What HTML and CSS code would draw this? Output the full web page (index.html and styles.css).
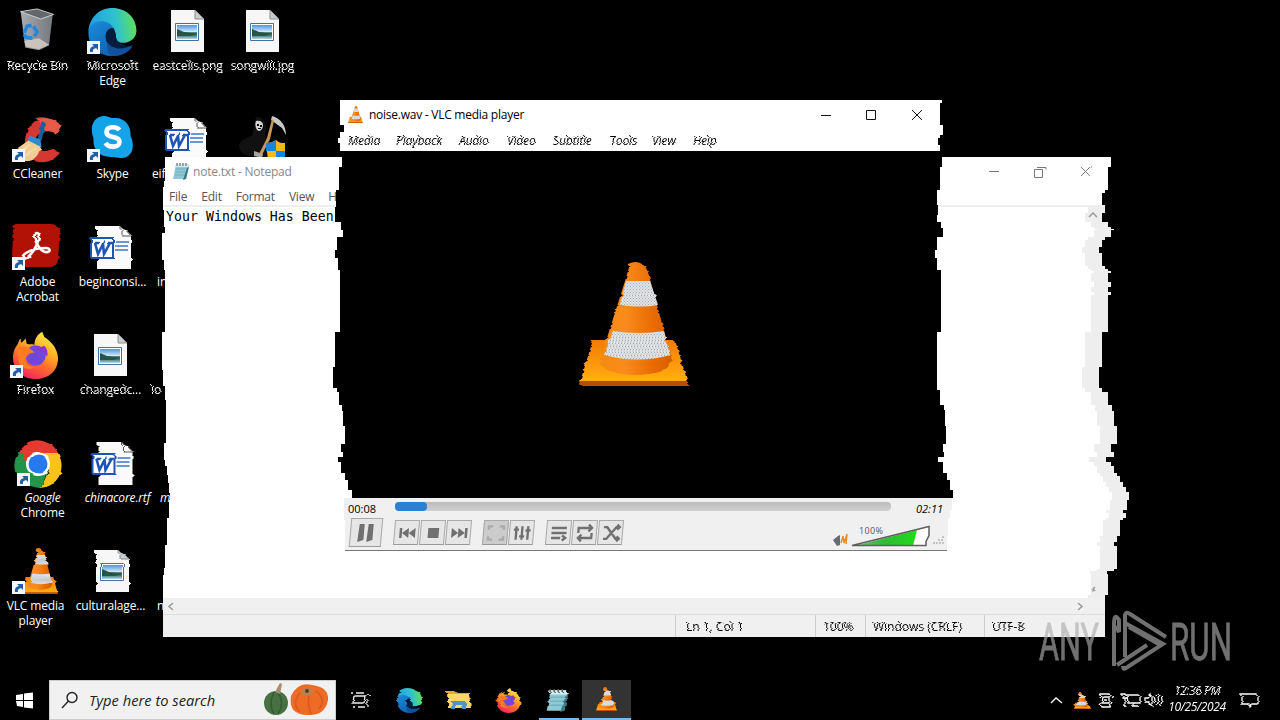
FILE: index.html
```html
<!DOCTYPE html>
<html lang="en">
<head>
<meta charset="utf-8">
<title>Desktop</title>
<link rel="stylesheet" href="styles.css">
</head>
<body>
<svg class="defs" width="0" height="0" aria-hidden="true">
  <defs>
    <filter id="tear" x="-10%" y="-10%" width="120%" height="120%" color-interpolation-filters="sRGB">
      <feTurbulence type="fractalNoise" baseFrequency="0.0001 0.22" numOctaves="2" seed="4"/>
      <feColorMatrix values="1 0 0 0 0  0 0 0 0 .5  0 0 0 0 .5  0 0 0 0 1" result="rows"/>
      <feDisplacementMap in="SourceGraphic" in2="rows" scale="9" xChannelSelector="R" yChannelSelector="G"/>
    </filter>
    <linearGradient id="gCone" x1="0" x2="1"><stop offset="0" stop-color="#f58a10"/><stop offset=".35" stop-color="#f98b1c"/><stop offset=".75" stop-color="#e96a00"/><stop offset="1" stop-color="#d85f00"/></linearGradient>
    <linearGradient id="gBase" x1="0" y1="0" x2="0" y2="1"><stop offset="0" stop-color="#f07c00"/><stop offset=".6" stop-color="#ff9d0c"/><stop offset=".9" stop-color="#ffb010"/><stop offset="1" stop-color="#d06000"/></linearGradient>
    <linearGradient id="gSky" x1="0" y1="0" x2="0" y2="1"><stop offset="0" stop-color="#4f94e0"/><stop offset=".5" stop-color="#d7ecf5"/><stop offset=".55" stop-color="#2d5a4c"/><stop offset=".75" stop-color="#447c74"/><stop offset="1" stop-color="#b7d9ec"/></linearGradient>
    <linearGradient id="gEdge" x1="0" y1=".3" x2="1" y2=".2"><stop offset="0" stop-color="#1f9fe0"/><stop offset=".55" stop-color="#2fc1d0"/><stop offset="1" stop-color="#62e34e"/></linearGradient>
    <linearGradient id="gEdge2" x1="0" y1="0" x2="1" y2="1"><stop offset="0" stop-color="#1a8fdc"/><stop offset="1" stop-color="#0c4fa0"/></linearGradient>
    <linearGradient id="gFox" x1=".8" y1="0" x2=".3" y2="1"><stop offset="0" stop-color="#fff04a"/><stop offset=".35" stop-color="#ffb325"/><stop offset=".65" stop-color="#ff6a2c"/><stop offset="1" stop-color="#f32063"/></linearGradient>
    <linearGradient id="gBin" x1="0" x2="1"><stop offset="0" stop-color="#a9acb0"/><stop offset=".5" stop-color="#8d9196"/><stop offset="1" stop-color="#75797e"/></linearGradient>
    <linearGradient id="gVol" x1="0" x2="1"><stop offset="0" stop-color="#79b579"/><stop offset=".5" stop-color="#2ebb35"/><stop offset="1" stop-color="#1fdc1a"/></linearGradient>
    <pattern id="mesh" width="3" height="3" patternUnits="userSpaceOnUse"><rect width="3" height="3" fill="#e2e5e8"/><path d="M0 0h1v1H0zM1.5 1.5h1v1h-1z" fill="#a5a9ae"/></pattern>

    <symbol id="bin" viewBox="0 0 48 48">
      <path d="M5 3 40 8l-4 33-11 5-15-3z" fill="url(#gBin)"/>
      <path d="M5 4 23 1l18 6-14 5z" fill="#63676b" stroke="#d4d6d8"/>
      <path d="M9 36l16-3 11 7-11 5-14-3z" fill="#d9cfc6" opacity=".8"/>
      <g fill="none" stroke="#2587d8" stroke-width="4"><path d="M9 27l3-7 5-1M19 20l4 6-3 5M18 33l-7-1-2-3"/></g>
    </symbol>
    <symbol id="edge" viewBox="0 0 48 48">
      <path d="M24 0C10 0 1 10 0 23c5-8 19-9 24-3 5 5 2 9 5 13 4 4 18 2 19-10C48 9 37 0 24 0z" fill="url(#gEdge)"/>
      <path d="M0 23C2 10 21 11 25 20c-7 0-9 7-7 13 3 8 13 12 26 5-4 7-12 10-20 10C9 48-1 37 0 23z" fill="url(#gEdge2)"/>
      <path d="M25 20c-7 0-9 7-7 13 3 8 13 12 26 5-7 0-11-1-15-5-3-4-1-8-4-13z" fill="#051d3c"/>
      <path d="M19 34c4 7 14 9 25 3-4 7-11 11-20 11-5-2-6-9-5-14z" fill="#11509c"/>
    </symbol>
    <symbol id="picture" viewBox="0 0 34 43">
      <path d="M0 0h24l9 9v33H0z" fill="#f7f7f7"/><path d="M24 0v9h9z" fill="#c9cccf" stroke="#8b8e92"/>
      <path d="M4.500 13.500h23v17h-23z" fill="#fff" stroke="#4171a8"/><path d="M6 15h20v14H6z" fill="url(#gSky)"/><path d="M6 19l7 3 13 2-7 2H6z" fill="#265545"/>
    </symbol>
    <symbol id="word" viewBox="0 0 42 44">
      <path d="M7 0h25l9 9v34H7z" fill="#fafafa"/><path d="M32 0v10h9z" fill="#fff" stroke="#555"/>
      <path d="M25 16h13M25 20h13M25 24h13" stroke="#3d78c8" stroke-width="1.300"/>
      <path d="M1 12h22v20H1z" fill="#fff" stroke="#1d54b5" stroke-width="2"/>
      <path d="M4 17h5M5 17l3 11 5-10 1 10 6-11M17 17h5" fill="none" stroke="#1d54b5" stroke-width="2.600"/>
    </symbol>
    <symbol id="ccleaner" viewBox="0 0 48 46">
      <path d="M46 9 41 17C33 11 23 14 21 22s6 15 15 9l9 4C37 46 24 46 17 41 7 34 9 9 23 3 30-1 40 1 46 9z" fill="#d43830"/>
      <path d="M23 1C31-1 41 1 46 9l-5 8c-3-3-7-4-11-3z" fill="#ef6a55" opacity=".7"/>
      <path d="M27 4l4 2-4 17-4-1z" fill="#145f9e"/><path d="M15 18l11 4 1 8-14-4z" fill="#2d8bd2"/>
      <path d="M14 23l12 6c-2 10-8 15-17 14L0 33z" fill="#f1cf94"/><path d="M4 35l12-8M9 40l12-10" stroke="#fae3bd"/>
    </symbol>
    <symbol id="skype" viewBox="0 0 42 43">
      <path d="M12 0c5 0 6 2 10 2 12-1 18 9 17 18 5 10 2 22-9 22-5 0-6-1-11-1C7 41 1 33 2 22-2 12 1 1 12 0z" fill="#14a2e8"/>
      <path d="M28 14c-3-4-13-4-13 2 0 7 13 3 13 10 0 6-11 6-14 1" fill="none" stroke="#fff" stroke-width="4.600"/>
    </symbol>
    <symbol id="reaper" viewBox="0 0 50 46">
      <path d="M18 1c9-1 12 9 9 18l6 9-4 14-9-2C6 42 1 35 1 29c4-9 14-6 14-13z" fill="#111"/>
      <path d="M18 5c4-1 7 1 7 4s-2 6-4 6-5-5-3-10z" fill="#d2d2d2"/><path d="M19 8h2v2h-2zM22 9h2v2h-2zM20 12h3v1h-3z" fill="#111"/>
      <path d="M34 0c8 2 14 9 14 19L44 12 33 4z" fill="#c7c9c9"/><path d="M34 3l-5 19-8 16 3 1 8-16 4-18z" fill="#c79857"/>
      <path d="M28 27c5 0 8-2 10-3 3 3 6 3 9 3v17H30z" fill="#f6b71c"/><path d="M28 27c5 0 8-2 10-3v11H28zM38 35h9v9h-9z" fill="#1686d9"/>
      <path d="M16 35l9 3-1 4-8-2z" fill="#aaa596"/>
    </symbol>
    <symbol id="acrobat" viewBox="0 0 48 43">
      <path d="M7 0h34c5 0 7 3 7 8l-2 27c0 5-4 8-8 8H6c-4 0-6-3-6-7L1 8c0-5 2-8 6-8z" fill="#b21206"/>
      <path d="M25 9c5 0 0 16-9 24-5 4-8 0-2-4 6-4 16-5 20-5 5 0 5 5-1 4-6-2-15-18-8-19z" fill="none" stroke="#fff" stroke-width="2.600"/>
    </symbol>
    <symbol id="firefox" viewBox="0 0 46 48">
      <path d="M5 12c1-3 2-5 3-5v4c3-1 3-3 5-4l1 5c2 1 5 0 8 1 0-6 3-11 8-13l2 5c8 5 14 13 14 22C46 40 36 48 23 48S0 39 0 26c0-6 2-10 5-14z" fill="url(#gFox)"/>
      <circle cx="23" cy="24" r="10.500" fill="#7048d8"/><path d="M5 16c8-3 12 0 17 5-4 0-7 2-8 4-4 6 3 12 9 11-10 5-18-1-18-11z" fill="#ff7b22"/><path d="M22 18l10-4c3 3 4 7 3 11-3-4-6-7-13-7z" fill="#8b37c8"/>
    </symbol>
    <symbol id="chrome" viewBox="0 0 50 48">
      <path d="M7 11C17-4 38-3 45 13L25 15 15 31z" fill="#e53a30"/><path d="M7 11C-4 24 0 45 28 48l7-18-19-1z" fill="#229449"/><path d="M45 13c9 16 0 33-17 35l8-18-5-17z" fill="#fbc219"/>
      <circle cx="25" cy="24" r="12" fill="#fff"/><circle cx="25" cy="24" r="9.500" fill="#267aed"/>
    </symbol>
    <symbol id="cone" viewBox="0 0 110 124" preserveAspectRatio="none">
      <path d="M14 78h82l13 43q1 3-3 3H3q-4 0-2-4z" fill="url(#gBase)"/>
      <path d="M1 119h108v3q0 2-3 2H3q-3 0-2-5z" fill="#b94e00"/>
      <path d="M51 2q8-4 14 0l4 8 24 88q-2 14-37 15-34-1-35-15l26-82z" fill="url(#gCone)"/>
      <path d="M47 19h24l8 24q-16 3-38 0z" fill="url(#mesh)"/>
      <path d="M34 69q26 4 51 0l6 24q-31 9-66 0z" fill="url(#mesh)"/>
    </symbol>
    <symbol id="shortcut" viewBox="0 0 13 13"><path d="M0 0h13v13H0z" fill="#f4f7fb"/><path d="M3 11q-1-5 4-6L5 3h6v6L9 7q-4 1-3 4z" fill="#2160a8"/></symbol>
    <symbol id="notepad" viewBox="0 0 18 17"><path d="M4 1h13l-3 15H1z" fill="#8fc9d3"/><path d="M4 1h13l-1 3H3z" fill="#d6edf0"/><path d="M4 6h11M4 9h10M3 12h11" stroke="#4f9baa" stroke-opacity=".5"/><path d="M5 0v3M8 0v3M11 0v3M14 0v3" stroke="#555"/><path d="M15 5l2-1-3 12-3 1z" fill="#357889"/></symbol>
  </defs>
</svg>

<main class="desktop">
  <section class="icons">
    <div class="item"><svg class="pic" style="width:44px;height:44px"><use href="#bin"/></svg><span class="label torn">Recycle Bin</span></div>
    <div class="item"><svg class="pic left2 torn" style="width:49px;height:49px"><use href="#ccleaner"/></svg><svg class="link"><use href="#shortcut"/></svg><span class="label">CCleaner</span></div>
    <div class="item"><svg class="pic left3 torn" style="width:48px;height:43px"><use href="#acrobat"/></svg><svg class="link"><use href="#shortcut"/></svg><span class="label">Adobe<br>Acrobat</span></div>
    <div class="item"><svg class="pic left3" style="width:45px;height:47px"><use href="#firefox"/></svg><svg class="link back2"><use href="#shortcut"/></svg><span class="label back5 torn">Firefox</span></div>
    <div class="item"><svg class="pic torn" style="width:50px;height:48px"><use href="#chrome"/></svg><svg class="link shift4"><use href="#shortcut"/></svg><span class="label shift"><i>Google</i><br>Chrome</span></div>
    <div class="item"><svg class="pic cone-small torn" style="width:37px;height:46px"><use href="#cone"/></svg><svg class="link"><use href="#shortcut"/></svg><span class="label back5">VLC media<br>player</span></div>

    <div class="item"><svg class="pic" style="width:49px;height:48px"><use href="#edge"/></svg><svg class="link"><use href="#shortcut"/></svg><span class="label"><span class="row torn">Microsoft</span><span class="row">Edge</span></span></div>
    <div class="item"><svg class="pic" style="width:43px;height:43px"><use href="#skype"/></svg><svg class="link"><use href="#shortcut"/></svg><span class="label">Skype</span></div>
    <div class="item"><svg class="pic left3 torn down2" style="width:42px;height:44px"><use href="#word"/></svg><span class="label">beginconsi...</span></div>
    <div class="item"><svg class="pic left3 down2" style="width:34px;height:43px"><use href="#picture"/></svg><span class="label back5 torn">changedc...</span></div>
    <div class="item"><svg class="pic torn down2" style="width:43px;height:44px"><use href="#word"/></svg><span class="label shift"><i>chinacore.rtf</i></span></div>
    <div class="item"><svg class="pic torn down2" style="width:34px;height:43px"><use href="#picture"/></svg><span class="label back5">culturalage...</span></div>

    <div class="item"><svg class="pic down2" style="width:34px;height:43px"><use href="#picture"/></svg><span class="label torn">eastcells.png</span></div>
    <div class="item"><svg class="pic left3 torn down2" style="width:42px;height:44px"><use href="#word"/></svg><span class="label cut">eif</span></div>
    <div class="item bare"><span class="label cut in4">in</span></div>
    <div class="item bare"><span class="label cut back1 torn">lo</span></div>
    <div class="item bare"><span class="label cut in7"><i>m</i></span></div>
    <div class="item bare"><span class="label cut in4">n</span></div>

    <div class="item"><svg class="pic down2" style="width:34px;height:43px"><use href="#picture"/></svg><span class="label torn">songwill.jpg</span></div>
    <div class="item"><svg class="pic" style="width:50px;height:46px"><use href="#reaper"/></svg></div>
  </section>

  <section class="window notepad">
    <div class="notepad-title"><svg width="18" height="17"><use href="#notepad"/></svg><span>note.txt - Notepad</span>
      <svg class="caption" width="110" height="14" fill="none" stroke="#777"><path d="M1 6.500h10M46.500 4.500h8v8h-8zM49 2.500h9v2M93 2l9 9M102 2l-9 9M103 2h1"/></svg></div>
    <nav class="notepad-menu"><span>File</span><span>Edit</span><span>Format</span><span>View</span><span>Help</span></nav>
    <div class="editor">Your Windows Has Been</div>
    <div class="hscroll"><svg width="6" height="9"><path d="M5 1 1 4.500 5 8"/></svg><svg width="6" height="9"><path d="M1 1l4 3.500L1 8"/></svg></div>
    <footer class="status"><i><span class="torn">Ln 1, Col 1</span></i><i><span class="torn">100%</span></i><i><span class="torn">Windows (CRLF)</span></i><i><span class="torn">UTF-8</span></i></footer>
    <div class="vscroll"><svg width="10" height="7"><path d="M1 5l4-4 4 4"/></svg><svg class="torn" width="10" height="7"><path d="M1 1l4 4 4-4"/></svg></div>
  </section>

  <section class="window vlc">
    <header class="vlc-title"><svg width="15" height="17"><use href="#cone"/></svg><span>noise.wav - VLC media player</span>
      <svg class="caption" width="104" height="12" fill="none" stroke="#111"><path d="M1 6.500h10M46.500 1.500h9v9h-9zM92 1l10 10M102 1 92 11"/></svg></header>
    <nav class="vlc-menu"><span>Media</span><span>Playback</span><span>Audio</span><span>Video</span><span>Subtitle</span><span>Tools</span><span>View</span><span>Help</span></nav>
    <div class="video"><svg class="torn" width="110" height="124"><use href="#cone"/></svg></div>
    <div class="controls">
      <div class="seek"><time>00:08</time><div class="track"><div class="played"></div></div><time class="slant">02:11</time></div>
      <div class="buttons">
        <b class="btn big"><svg viewBox="0 0 24 24"><path d="M5 3h5v16l-6 2zM14 3h5v16l-6 2z"/></svg></b>
        <span class="group">
          <b class="btn"><svg viewBox="0 0 24 24"><path d="M3 6h3v12H3zM14 6v12l-8-6zM22 6v12l-8-6z"/></svg></b>
          <b class="btn"><svg viewBox="0 0 24 24"><path d="M6 6h13v12H6z"/></svg></b>
          <b class="btn"><svg viewBox="0 0 24 24"><path d="M3 6l8 6-8 6zM11 6l8 6-8 6zM19 6h3v12h-3z"/></svg></b>
        </span>
        <span class="group">
          <b class="btn off"><svg viewBox="0 0 24 24" class="line"><path d="M3 8V4h5M16 4h5v4M21 16v4h-5M8 20H3v-4"/></svg></b>
          <b class="btn"><svg viewBox="0 0 24 24" class="line"><path d="M5 4v16M12 4v16M19 4v16M2 8h6M9 16h6M16 9h6"/></svg></b>
        </span>
        <span class="group">
          <b class="btn"><svg viewBox="0 0 24 24" class="line"><path d="M3 6h18M3 12h18M3 18h11M16 15l4 3-4 3"/></svg></b>
          <b class="btn"><svg viewBox="0 0 24 24" class="line"><path d="M4 12V6h15M16 2l4 4-4 4M20 12v6H5M8 14l-4 4 4 4"/></svg></b>
          <b class="btn"><svg viewBox="0 0 24 24" class="line"><path d="M3 5h4l11 14h4M3 19h4L18 5h4M19 2l3 3-3 3M19 16l3 3-3 3"/></svg></b>
        </span>
        <svg class="volume" width="118" height="28">
          <path d="M2 17l5-4 2-1v10l-3 1z" fill="#676b76"/><path d="M10 20l2-7 1 7 3-9-1 10" fill="none" stroke="#f08b22" stroke-width="1.500"/>
          <path d="M21 23 98 3l-3 20z" fill="#fff"/><path d="M23 23l63-16-4 16z" fill="url(#gVol)"/><path d="M21 22.500 98 3.500v9l-3 6v4H22z" fill="none" stroke="#5f5f5f" stroke-width="1.500"/>
          <path d="M102 20h11M107 17h6M111 14h2" stroke="#999" stroke-dasharray="2 1"/>
          <text x="28" y="11" textLength="24">100%</text>
        </svg>
      </div>
    </div>
  </section>

  <svg class="watermark" width="200" height="70" viewBox="0 0 200 70">
    <text x="4" y="53" textLength="60" lengthAdjust="spacingAndGlyphs">ANY</text>
    <path d="M79 59V25q0-10 5 0V13q-5-8-5 4zM82 58 112 38M90 50V8q1-4 5-1l36 23M90 16l38 21-37 24q-3 2-3-2M94 20l33 19" fill="none"/>
    <text x="135" y="53" textLength="62" lengthAdjust="spacingAndGlyphs">RUN</text>
  </svg>

  <footer class="taskbar">
    <div class="start"><svg width="19" height="17"><path d="M1 3l7-1v6H1zM9 1.500l9-1V8H9zM1 9h7v6l-6-1zM9 9h9v7.500l-9-1z" fill="#fff"/></svg></div>
    <div class="search"><svg width="18" height="18" fill="none" stroke="#222" stroke-width="1.400"><circle cx="11" cy="6.500" r="5"/><path d="M7.500 10 1 17"/></svg><span>Type here to search</span>
      <svg class="pumpkins" width="66" height="36"><ellipse cx="13" cy="21" rx="12" ry="12" fill="#477143"/><path d="M11 10q-6 12 0 22M15 10q7 12 0 22" fill="none" stroke="#264b2d" stroke-width="1.500" stroke-opacity=".6"/><path d="M12 10l5-9 2 1-2 10z" fill="#a68c69"/><path d="M28 14Q35-1 49 3q17 2 16 15-3 16-20 15-20 0-17-19z" fill="#ed6b25"/><path d="M37 11q-9 11 0 19M46 13q-2 9 2 19M53 9q11 9 3 18" fill="none" stroke="#c54515" stroke-width="1.500" stroke-opacity=".5"/><ellipse cx="44" cy="10" rx="6" ry="4" fill="#b9824e"/><ellipse cx="44" cy="9" rx="2" ry="2" fill="#513e2c"/></svg></div>
    <div class="task"><svg class="torn" width="20" height="18" fill="none" stroke="#eee" stroke-width="1.300"><path d="M2 2h2M7 2h8M3 5h11l-1 7H2zM1 16h2M6 16h7M17 4h2M16 8v8"/></svg></div>
    <div class="task"><svg class="torn" width="27" height="25"><use href="#edge"/></svg></div>
    <div class="task"><svg class="torn" width="26" height="22"><path d="M1 2h9l3 2h10v4H1z" fill="#e8a72a"/><path d="M2 5h21l2 14H2z" fill="#ffd669"/><path d="M6 12h14v8h-4l-1-4H9v4H5z" fill="#4d94ca"/></svg></div>
    <div class="task"><svg class="torn" width="25" height="25"><use href="#firefox"/></svg></div>
    <div class="task open"><svg class="torn" width="25" height="23" viewBox="0 0 18 17"><use href="#notepad"/></svg></div>
    <div class="task active"><svg class="torn" width="21" height="24"><use href="#cone"/></svg></div>
    <div class="tray">
      <svg width="13" height="8" fill="none" stroke="#fff" stroke-width="1.300"><path d="M1 7l5-5 6 5"/></svg>
      <svg class="torn" width="17" height="17"><use href="#cone"/></svg>
      <svg class="torn" width="16" height="17" fill="none" stroke="#fff" stroke-width="1.300"><path d="M2 6l2-4h9l2 4M14 10l-3 5H3l-1-4M5 5h6v6H4zM6 8h3"/></svg>
      <svg class="torn" width="19" height="16" fill="none" stroke="#fff" stroke-width="1.300"><path d="M5 3h13v8H6zM9 14h7M12 11v3M1 2h4v4H1zM3 6v8H1"/></svg>
      <svg class="torn" width="20" height="16" fill="none" stroke="#fff" stroke-width="1.300"><path d="M1 6h3l4-4v12l-4-4H1zM10 5q2 3 0 6M13 3q3 5 0 10M16 2q4 6 0 12"/></svg>
      <div class="clock torn"><span>12:36 PM</span><span>10/25/2024</span></div>
      <svg class="torn" width="20" height="17" fill="none" stroke="#fff" stroke-width="1.300"><path d="M2 2h16v10h-6l-3 3v-3H2z"/></svg>
    </div>
  </footer>
</main>
<script src="edges.js"></script>
</body>
</html>
```
FILE: styles.css
```css
* { box-sizing: border-box; }
body { margin: 0; background: #000; overflow: hidden; font: 12px/15px "Open Sans", "Noto Sans", sans-serif; color: #000; }
svg { display: block; flex: none; overflow: visible; }
.defs { position: absolute; }
.desktop { position: relative; width: 1280px; height: 720px; background: #000; overflow: hidden; display: flex; flex-direction: column; justify-content: space-between; }
.slant, i { font-style: italic; }
.torn { filter: url(#tear); }

.icons { display: grid; grid-template-rows: repeat(6, 108px); grid-auto-flow: column; grid-auto-columns: 75px; width: 300px; height: 648px; }
.item { position: relative; display: flex; flex-direction: column; align-items: center; padding-top: 8px; }
.item .pic { margin-bottom: auto; }
.item .label { position: absolute; top: 58px; left: -3px; width: 81px; color: #fff; text-align: center; white-space: nowrap; letter-spacing: -.15px; }
.item .label.shift { left: 2px; }
.item .label.back5 { left: -5px; }
.item .label.cut { left: 2px; text-align: left; }
.item .label.in4 { left: 7px; }
.item .label.in7 { left: 10px; }
.item .label.back1 { left: 1px; }
.row { display: block; }
.pic.left2 { margin-left: 2px; }
.pic.left3 { margin-right: 4px; }
.pic.down2 { margin-top: 2px; }
.cone-small { margin-left: 4px; }
.link { position: absolute; left: 12px; top: 41px; width: 13px; height: 13px; }
.link.back2 { left: 10px; }
.link.shift4 { left: 17px; }

.window { position: absolute; display: flex; flex-direction: column; }
.notepad { left: 160px; top: 157px; width: 972px; height: 480px; background: #fff; padding-left: 3px; }
.notepad-title { height: 29px; display: flex; align-items: center; gap: 3px; padding: 0 34px 0 9px; color: #888; letter-spacing: -.2px; }
.notepad-title .caption { margin-left: auto; }
.notepad-menu { height: 21px; display: flex; gap: 14px; padding: 3px 0 0 6px; color: #555; border-bottom: 2px solid #eee; width: 942px; letter-spacing: -.2px; }
.editor { flex: 1; padding: 2px 0 0 3px; font: 13.200px/16px "DejaVu Sans Mono", monospace; letter-spacing: .05px; }
.hscroll { height: 16px; background: #f0f0f0; display: flex; align-items: center; justify-content: space-between; padding: 0 49px 0 5px; }
.hscroll svg, .vscroll svg { fill: none; stroke: #999; stroke-width: 1.500; }
.status { height: 23px; background: #f0f0f0; border-top: 1px solid #ddd; display: grid; grid-template-columns: 140px 50px 119px 148px; padding-left: 512px; }
.status i { border-left: 1px solid #ccc; padding: 4px 0 0 7px; }
.status i span { display: inline-block; font-style: normal; }
.status i:first-child { padding-left: 10px; }
.vscroll { position: absolute; inset: 49px 0 38px 0; background: #eee; display: flex; flex-direction: column; justify-content: space-between; align-items: flex-end; padding: 6px 34px 6px; }

.vlc { left: 330px; top: 100px; width: 630px; height: 451px; }
.vlc-title { height: 29px; flex: none; background: #fff; display: flex; align-items: center; gap: 6px; padding: 0 36px 0 18px; letter-spacing: -.25px; }
.vlc-title .caption { margin-left: auto; }
.vlc-menu { height: 22px; flex: none; background: #fff; display: grid; grid-template-columns: 48px 63px 48px 46px 57px 42px 41px 40px; padding: 4px 0 0 18px; font-style: italic; letter-spacing: -.15px; }
.vlc-menu span { justify-self: start; filter: url(#tear); }
.video { flex: 1; background: #000; display: flex; align-items: center; justify-content: center; padding: 0 23px 2px 0; }
.controls { height: 53px; flex: none; background: #f0f0f0; border-bottom: 1px solid #777; }
.seek { height: 19px; display: flex; align-items: center; padding: 2px 17px 0 18px; font: 11px/14px "Open Sans", sans-serif; }
.track { width: 496px; height: 9px; margin: -4px auto 0 19px; border-radius: 4px; background: linear-gradient(#bbb, #d0d0d0); }
.played { width: 32px; height: 9px; border-radius: 4px; background: #2a80d4; }
.buttons { height: 33px; display: flex; align-items: flex-start; padding: 1px 11px 0 20px; }
.btn { width: 25px; height: 25px; border: 1px solid #aaa; border-bottom-color: #999; background: #e6e6e6; display: grid; place-items: center; transform: skewX(-5deg); }
.btn svg { width: 20px; height: 20px; fill: #707070; }
.btn svg.line { fill: none; stroke: #707070; stroke-width: 2.800; }
.btn.off { background: #ccc; }
.btn.off svg.line { stroke: #aaa; }
.btn.big { width: 32px; height: 29px; }
.btn.big svg { width: 24px; height: 24px; }
.group { display: flex; gap: 1px; padding-top: 2px; margin-left: 12px; }
.volume { margin: 5px 0 0 auto; }
.volume text { font: 9px "Open Sans", sans-serif; fill: #555; }

.watermark { position: absolute; left: 1035px; top: 607px; opacity: .65; }
.watermark text { font: 52px Roboto, sans-serif; fill: #adadad; stroke: #adadad; stroke-width: .8; }
.watermark path { stroke: #adadad; stroke-width: 4; }

.taskbar { height: 40px; display: flex; background: #000; }
.start { width: 49px; display: grid; place-items: center; }
.search { width: 287px; background: #f1f1f1; border: 1px solid #ccc; display: flex; align-items: center; gap: 10px; padding: 0 6px 0 11px; font-size: 14.700px; font-style: italic; color: #222; }
.search .pumpkins { margin-left: auto; }
.task { width: 49.200px; display: grid; place-items: center; }
.task.open { background: linear-gradient(#76b9ed, #76b9ed) 6px 38px / 40px 2px no-repeat; }
.task.active { background: #333; border-bottom: 2px solid #76b9ed; }
.tray { margin-left: auto; display: flex; align-items: center; padding-right: 20px; gap: 8px; }
.tray svg:nth-child(1) { margin-right: 2px; }
.tray svg:nth-child(4) { margin-right: -5px; }
.clock { width: 62px; display: flex; flex-direction: column; align-items: center; color: #fff; font-style: italic; line-height: 16px; letter-spacing: -.4px; margin: -3px 4px 0 -6px; }
```
FILE: edges.js
```js
// Each profile lists [screen y where the run starts, x of the window edge].
const notepadLeft = [[157,165],[181,164],[187,163],[210,164],[227,165],[233,162],[260,164],[270,165],[332,162],[370,163],[386,165],[400,166],[443,164],[460,165],[466,167],[475,168],[483,169],[493,170],[500,169],[518,167],[545,165],[568,164],[575,163]];
const notepadRight = [[157,1111],[167,1108],[190,1105],[193,1102],[205,1105],[213,1102],[222,1108],[227,1111],[229,1114],[230,1111],[237,1105],[240,1102],[247,1099],[253,1102],[266,1105],[269,1108],[271,1111],[273,1108],[282,1111],[287,1108],[292,1111],[295,1108],[332,1102],[367,1099],[388,1102],[392,1108],[405,1112],[411,1114],[426,1117],[444,1111],[452,1114],[457,1106],[462,1111],[466,1114],[473,1117],[476,1120],[482,1123],[487,1126],[492,1129],[500,1127],[510,1123],[513,1126],[518,1123],[520,1120],[536,1117],[542,1114],[546,1117],[569,1114],[571,1107],[574,1108],[595,1105]];
const vlcLeft = [[100,340],[125,344],[132,340],[138,338],[143,340],[157,342],[167,339],[190,336],[207,335],[222,341],[230,343],[237,337],[250,335],[258,338],[270,340],[332,335],[367,333],[388,337],[392,339],[405,342],[411,343],[426,345],[444,341],[452,343],[457,338],[462,341],[473,345],[480,348],[490,352],[498,344],[520,345]];
const vlcRight = [[100,942],[103,940],[125,943],[135,940],[138,938],[145,940],[157,942],[167,940],[190,937],[205,938],[215,937],[222,941],[228,943],[237,937],[250,935],[258,937],[270,941],[332,937],[390,940],[405,944],[410,945],[426,946],[444,943],[452,944],[457,938],[462,943],[473,947],[480,950],[490,953],[498,952],[510,950],[518,948],[536,947]];

function steps(profile, bottom) {
  return profile.flatMap(([y, x], i) => [[x, y], [x, i + 1 < profile.length ? profile[i + 1][0] : bottom]]);
}
function clip(selector, left, right, x0, y0, bottom) {
  const points = steps(left, bottom).concat(steps(right, bottom).reverse());
  document.querySelector(selector).style.clipPath =
    `polygon(${points.map(([x, y]) => `${x - x0}px ${y - y0}px`).join(",")})`;
}
clip(".notepad", notepadLeft, notepadRight, 160, 157, 637);
clip(".vlc", vlcLeft, vlcRight, 330, 100, 551);
const bar = notepadRight.filter(([y]) => y >= 205);
clip(".vscroll", bar.map(([y, x]) => [y, x - 17]), bar, 160, 206, 599);
```
